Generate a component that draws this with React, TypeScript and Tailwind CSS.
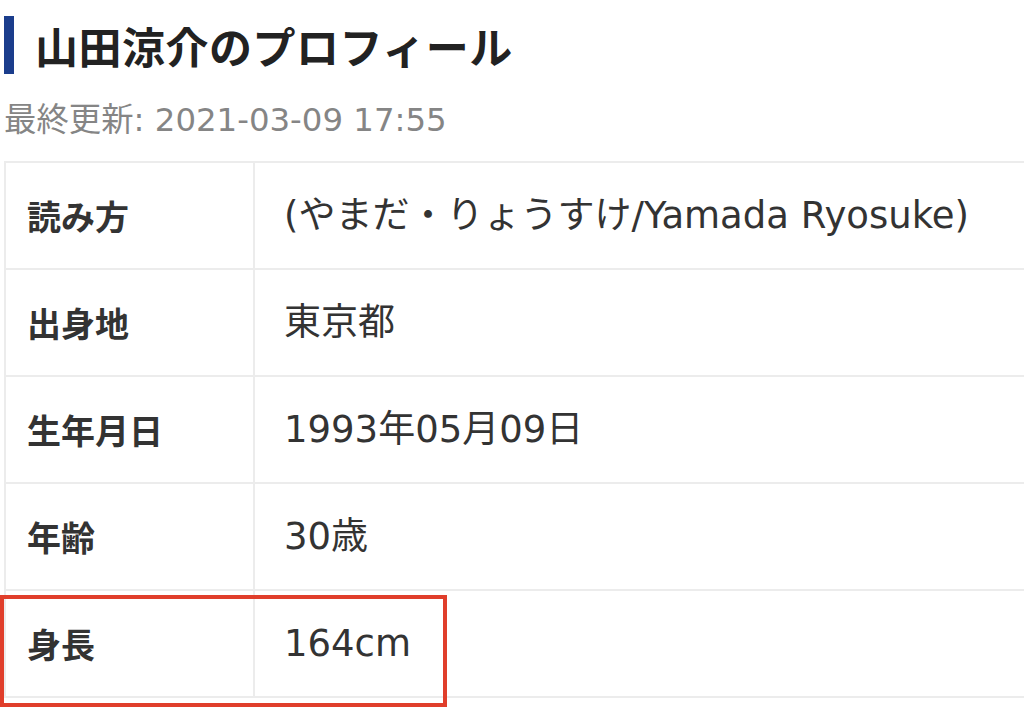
import React from "react";

const rows: [string, string][] = [
  ["読み方", "(やまだ・りょうすけ/Yamada Ryosuke)"],
  ["出身地", "東京都"],
  ["生年月日", "1993年05月09日"],
  ["年齢", "30歳"],
  ["身長", "164cm"],
];

export default function App() {
  return (
    <div
      className="relative w-[1024px] h-[718px] overflow-hidden bg-white pl-[4px] pt-[16px]"
      style={{ fontFamily: '"DejaVu Sans", "Noto Sans CJK JP", sans-serif' }}
    >
      <div className="flex items-center h-[58px]">
        <div className="w-[10px] h-[58px] bg-[#1b3d8c]" />
        <h1 className="ml-[21px] text-[43px] leading-[58px] font-bold text-[#222222] tracking-[0.5px]" style={{ fontFamily: '"Noto Sans CJK JP", sans-serif' }}>
          山田涼介のプロフィール
        </h1>
      </div>
      <div className="mt-[26px] h-[40px] leading-[40px] text-[32.4px] text-[#858585]">
        最終更新: 2021-03-09 17:55
      </div>
      <div className="mt-[21px] w-[1040px] border-2 border-b-0 border-[#ececec]">
        {rows.map(([k, v]) => (
          <div key={k} className="flex h-[107px] border-b-2 border-[#ececec]">
            <div className="w-[249px] shrink-0 border-r-2 border-[#ececec] flex items-center pl-[21px] text-[34px] font-bold text-[#333333]" style={{ fontFamily: '"Noto Sans CJK JP", sans-serif' }}>
              {k}
            </div>
            <div className="flex-1 flex items-center pl-[29px] text-[37px] text-[#333333]">
              {v}
            </div>
          </div>
        ))}
      </div>
      <div className="absolute left-0 top-[595px] w-[447px] h-[112px] border-4 border-[#e03e2b]" />
    </div>
  );
}
